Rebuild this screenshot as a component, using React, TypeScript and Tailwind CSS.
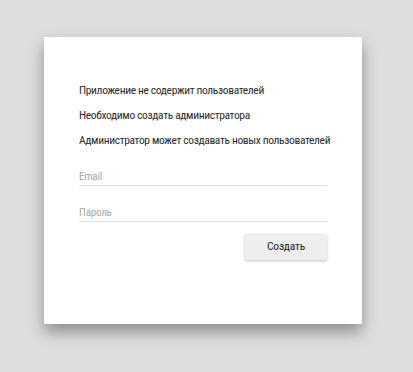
import React from 'react';

export default function App() {
    return (
        <div className="min-h-[372px] w-[413px] bg-[#dddddd] pl-[44px] pt-[37px] font-['Roboto_Condensed','Roboto',sans-serif]">
            <div className="w-[318px] h-[287px] bg-white shadow-[0_8px_14px_rgba(0,0,0,0.35)] px-[35px] pt-[46px]">
                <div className="flex flex-col gap-[11px] text-[11.5px] leading-[14px] tracking-[-0.35px] text-[#2a2a2a] whitespace-nowrap">
                    <p>Приложение не содержит пользователей</p>
                    <p>Необходимо создать администратора</p>
                    <p>Администратор может создавать новых пользователей</p>
                </div>
                <div className="mt-[20px] flex flex-col gap-[17px]">
                    <input placeholder="Email" className="w-full h-[19px] border-b border-[#e0e0e0] text-[11px] tracking-[-0.2px] text-[#333] placeholder:text-[#a8a8a8] outline-none" />
                    <input placeholder="Пароль" type="password" className="w-full h-[19px] border-b border-[#e0e0e0] text-[11px] tracking-[-0.2px] text-[#333] placeholder:text-[#a8a8a8] outline-none" />
                </div>
                <div className="mt-[12px] flex justify-end">
                    <button className="w-[82px] h-[26px] bg-[#eeeeee] text-[11.5px] tracking-[-0.2px] text-[#222] shadow-[0_1px_3px_rgba(0,0,0,0.25)] rounded-[2px]">Создать</button>
                </div>
            </div>
        </div>
    );
}
